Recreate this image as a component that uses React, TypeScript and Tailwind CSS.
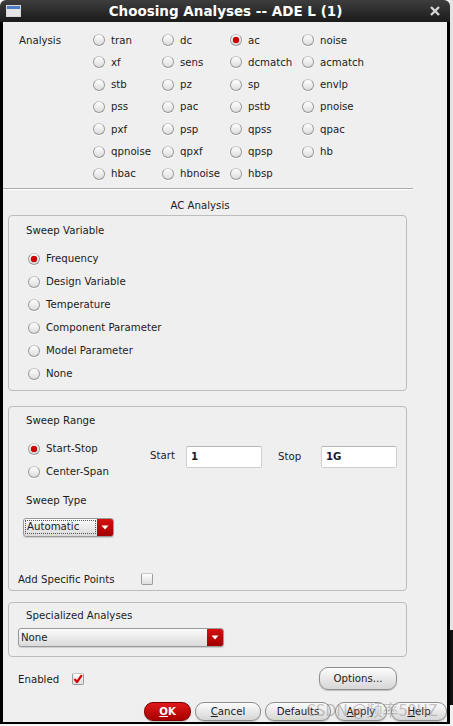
import React from "react";

const analysisRows: (string | null)[][] = [
  ["tran", "dc", "ac", "noise"],
  ["xf", "sens", "dcmatch", "acmatch"],
  ["stb", "pz", "sp", "envlp"],
  ["pss", "pac", "pstb", "pnoise"],
  ["pxf", "psp", "qpss", "qpac"],
  ["qpnoise", "qpxf", "qpsp", "hb"],
  ["hbac", "hbnoise", "hbsp", null],
];

const colWidths = ["w-[69px]", "w-[68px]", "w-[72px]", "w-[80px]"];

function Radio({ checked = false, label }: { checked?: boolean; label: string }) {
  return (
    <span className="flex items-center gap-[6px]">
      <span className="flex h-[12px] w-[12px] shrink-0 items-center justify-center rounded-full border border-[#9a9a9a] border-t-[#c4c4c4] bg-linear-to-b from-[#ffffff] to-[#dcdcdc] shadow-[0_1px_0_rgba(255,255,255,0.8)]">
        {checked && <span className="h-[6px] w-[6px] rounded-full bg-[#d00000] shadow-[0_0_1px_#700]" />}
      </span>
      <span>{label}</span>
    </span>
  );
}

function Checkbox({ checked = false }: { checked?: boolean }) {
  return (
    <span className="flex h-[12px] w-[12px] shrink-0 items-center justify-center rounded-[2px] border border-[#9c9c9c] border-t-[#c6c6c6] bg-linear-to-b from-[#ffffff] to-[#dedede]">
      {checked && (
        <svg width="10" height="10" viewBox="0 0 10 10">
          <path d="M1.5 5 L4 8 L8.8 1.2" fill="none" stroke="#d40000" strokeWidth="2.2" strokeLinejoin="round" />
        </svg>
      )}
    </span>
  );
}

function Dropdown({ value, width, focus = false }: { value: string; width: string; focus?: boolean }) {
  return (
    <div className={`flex h-[19px] ${width} overflow-hidden rounded-[3px] border border-[#9a9a9a] bg-linear-to-b from-[#fbfbfb] to-[#dadada] shadow-[0_1px_1px_rgba(0,0,0,0.15)]`}>
      <div className="flex flex-1 items-center px-[1px]">
        <span className={`flex h-[14px] flex-1 items-center pl-[1px] ${focus ? "border border-dotted border-[#555]" : ""}`}>{value}</span>
      </div>
      <div className="flex w-[16px] items-center justify-center bg-linear-to-b from-[#d81010] to-[#a00000]">
        <svg width="8" height="5" viewBox="0 0 8 5">
          <path d="M0.5 0.5 H7.5 L4 4.5 Z" fill="#ffffff" />
        </svg>
      </div>
    </div>
  );
}

function Button({ children, width, primary = false }: { children: React.ReactNode; width: string; primary?: boolean }) {
  return (
    <div
      className={`flex h-full ${width} items-center justify-center rounded-[9px] border ${
        primary
          ? "border-[#7a0000] bg-linear-to-b from-[#e01818] to-[#a80000] font-bold text-white"
          : "border-[#8e8e8e] bg-linear-to-b from-[#fcfcfc] to-[#d6d6d6]"
      } shadow-[0_1px_1px_rgba(0,0,0,0.2)]`}
    >
      {children}
    </div>
  );
}

function TextField({ value }: { value: string }) {
  return (
    <div className="flex h-[22px] w-[76px] items-center rounded-[2px] border border-[#cfcfcf] border-t-[#b4b4b4] bg-white pl-[4px] pt-[1px] font-bold">
      {value}
    </div>
  );
}

export default function App() {
  return (
    <div className="relative flex h-[726px] w-[453px] overflow-hidden bg-[#f6f6f6] font-['DejaVu_Sans',sans-serif] text-[10.2px] text-[#1c1c1c]">
      <div className="flex h-[724px] w-[450px] flex-col">
        {/* Title bar */}
        <div className="flex h-[22px] items-center rounded-t-[6px] bg-linear-to-b from-[#3e3e3e] to-[#1b1b1b] px-[6px]">
          <div className="flex h-[12px] w-[15px] flex-col overflow-hidden border border-[#d8d8d8] bg-[#e6e6e6]">
            <div className="h-[3px] bg-[#4f7ac4]" />
          </div>
          <div className="flex-1 text-center text-[13.5px] font-bold text-white">Choosing Analyses -- ADE L (1)</div>
          <svg width="10" height="10" viewBox="0 0 10 10" className="mr-[4px]">
            <path d="M1 1 L9 9 M9 1 L1 9" stroke="#d6d6d6" strokeWidth="2.4" />
          </svg>
        </div>

        {/* Body */}
        <div className="flex flex-1 flex-col border-x-[3px] border-b-2 border-black bg-[#efefef]">
          {/* Analysis grid */}
          <div className="flex flex-col pt-[7px]">
            {analysisRows.map((row, r) => (
              <div key={r} className="flex h-[22.3px] items-center">
                <span className="w-[90px] pl-[16px]">{r === 0 ? "Analysis" : ""}</span>
                {row.map((name, c) => (
                  <span key={c} className={colWidths[c]}>
                    {name && <Radio label={name} checked={name === "ac"} />}
                  </span>
                ))}
              </div>
            ))}
          </div>

          <div className="mt-[3px] h-px w-[410px] bg-[#a9a9a9] shadow-[0_1px_0_#ffffff]" />

          <div className="mt-[10px] h-[14px] w-[394px] text-center leading-[14px]">AC Analysis</div>

          {/* Sweep Variable */}
          <div className="ml-[5px] mt-[2px] h-[176px] w-[399px] rounded-[4px] border border-[#bcbcbc] pt-[8px]">
            <div className="h-[14px] pl-[17px] leading-[14px]">Sweep Variable</div>
            <div className="mt-[9.5px] flex flex-col pl-[19px]">
              {["Frequency", "Design Variable", "Temperature", "Component Parameter", "Model Parameter", "None"].map((v) => (
                <div key={v} className="flex h-[23px] items-center">
                  <Radio label={v} checked={v === "Frequency"} />
                </div>
              ))}
            </div>
          </div>

          {/* Sweep Range */}
          <div className="ml-[5px] mt-[15px] h-[185px] w-[399px] rounded-[4px] border border-[#bcbcbc] pt-[7px]">
            <div className="h-[14px] pl-[17px] leading-[14px]">Sweep Range</div>
            <div className="mt-[9.5px] flex">
              <div className="flex w-[141px] flex-col pl-[19px]">
                <div className="flex h-[23px] items-center">
                  <Radio label="Start-Stop" checked />
                </div>
                <div className="flex h-[23px] items-center">
                  <Radio label="Center-Span" />
                </div>
              </div>
              <div className="mt-[8px] flex h-[22px] items-center">
                <span className="w-[36px] pb-[2px]">Start</span>
                <TextField value="1" />
                <span className="ml-[16px] w-[43px]">Stop</span>
                <TextField value="1G" />
              </div>
            </div>
            <div className="mt-[10px] h-[14px] pl-[17px] leading-[14px]">Sweep Type</div>
            <div className="ml-[14px] mt-[10px]">
              <Dropdown value="Automatic" width="w-[91px]" focus />
            </div>
            <div className="ml-[9px] mt-[36px] flex h-[12px] items-center">
              <span className="w-[123px] pt-[2px]">Add Specific Points</span>
              <Checkbox />
            </div>
          </div>

          {/* Specialized Analyses */}
          <div className="ml-[5px] mt-[11px] h-[55px] w-[399px] rounded-[4px] border border-[#bcbcbc] pt-[6px]">
            <div className="h-[14px] pl-[17px] leading-[14px]">Specialized Analyses</div>
            <div className="ml-[9px] mt-[5px]">
              <Dropdown value="None" width="w-[206px]" />
            </div>
          </div>

          {/* Enabled / Options */}
          <div className="mt-[10px] flex h-[23px] items-center">
            <span className="w-[69px] pl-[15px] pt-[2px]">Enabled</span>
            <Checkbox checked />
            <div className="ml-auto mr-[50px] h-[23px]">
              <Button width="w-[78px]">Options...</Button>
            </div>
          </div>

          {/* Bottom buttons */}
          <div className="mt-[12px] flex h-[19px] justify-end gap-[4px]">
            <Button width="w-[47px]" primary>
              <span>
                <span className="underline">O</span>K
              </span>
            </Button>
            <Button width="w-[66px]">
              <span>
                <span className="underline">C</span>ancel
              </span>
            </Button>
            <Button width="w-[66px]">Defaults</Button>
            <Button width="w-[52px]">
              <span>
                <span className="underline">A</span>pply
              </span>
            </Button>
            <Button width="w-[56px]">
              <span>
                <span className="underline">H</span>elp
              </span>
            </Button>
          </div>
        </div>
      </div>
      <div className="flex w-[3px] flex-col">
        <div className="h-[630px] bg-[#e4e4e4]" />
        <div className="h-[75px] bg-[#111]" />
        <div className="flex-1 bg-[#f0f0f0]" />
      </div>

      {/* watermark */}
      <div className="pointer-events-none absolute left-[306px] top-[699px] font-['Noto_Sans_CJK_SC',sans-serif] text-[16px] leading-[20px] text-[#8c8c8c]/50">
        CSDN @频率50HZ
      </div>
    </div>
  );
}
